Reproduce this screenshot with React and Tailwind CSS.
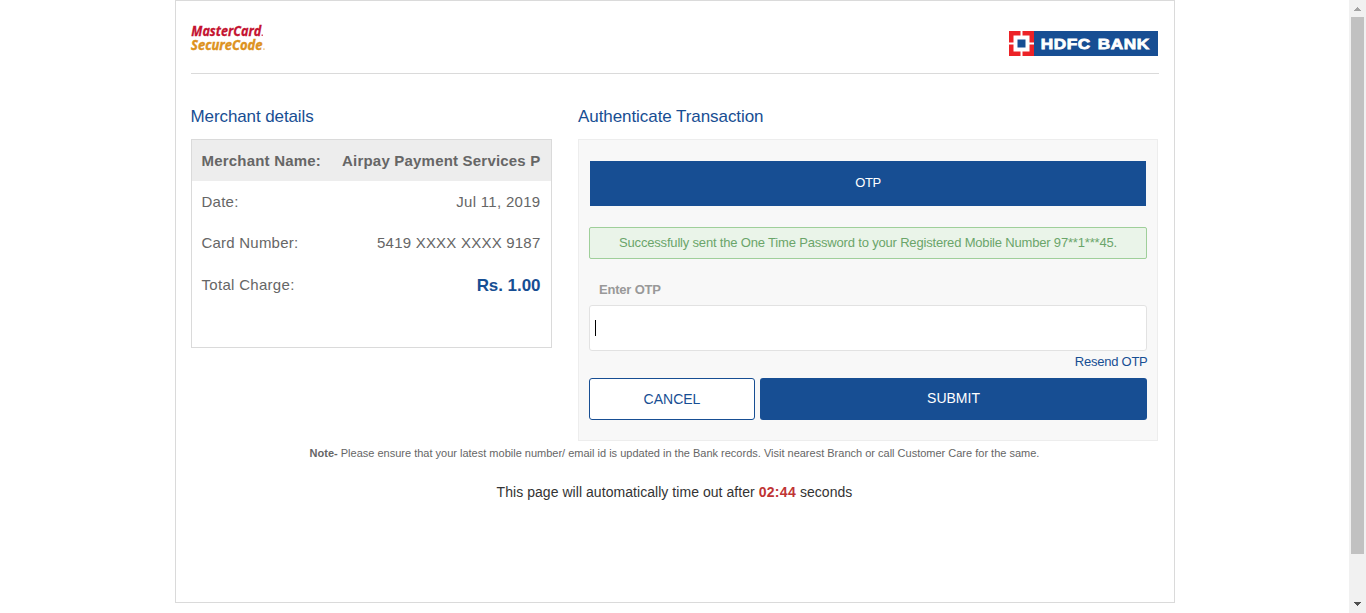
function MasterCardLogo() {
  return (
    <svg className="block overflow-visible" width="80" height="32" viewBox="0 0 80 32" role="img" aria-label="MasterCard SecureCode">
      <g fontFamily="'Open Sans', sans-serif" fontStyle="italic" fontSize="14">
        <text x="0.3" y="14" fill="#c41230" stroke="#c41230" strokeWidth="0.3" fontWeight="700" textLength="70" lengthAdjust="spacingAndGlyphs">MasterCard</text>
        <text x="0" y="28" fill="#dd9220" stroke="#dd9220" strokeWidth="0.4" fontWeight="700" textLength="71.5" lengthAdjust="spacingAndGlyphs">SecureCode</text>
      </g>
      <rect x="70.5" y="12.5" width="1.5" height="1.5" fill="#d8526a" />
      <rect x="72" y="26.5" width="1.8" height="1.2" fill="#ecc47e" />
    </svg>
  );
}

function HdfcLogo() {
  return (
    <svg className="block" width="149" height="25" viewBox="0 0 149 25" role="img" aria-label="HDFC BANK">
      <rect width="149" height="25" fill="#174e93" />
      <rect width="25" height="25" fill="#ec2227" />
      <path d="M11.5 0h2v25h-2zM0 11.5h25v2H0z" fill="#fff" />
      <rect x="4.5" y="4.5" width="16" height="16" fill="#fff" />
      <rect x="8.5" y="8.5" width="8" height="8" fill="#174e93" />
      <text x="31.8" y="17.8" fill="#fff" stroke="#fff" strokeWidth="0.8" fontFamily="'Liberation Sans', sans-serif" fontWeight="700" fontSize="15.5" letterSpacing="0.5" wordSpacing="1.5" textLength="109" lengthAdjust="spacingAndGlyphs">HDFC BANK</text>
    </svg>
  );
}

function Row({ label, value, className, valueClass = "" }) {
  return (
    <div className={`flex items-center justify-between pl-[10px] pr-[10px] ${className}`}>
      <span>{label}</span>
      <span className={valueClass}>{value}</span>
    </div>
  );
}

function Scrollbar() {
  return (
    <div className="flex h-[613px] w-[17px] shrink-0 flex-col items-center bg-[#f1f1f1]">
      <svg className="block shrink-0" width="17" height="17" viewBox="0 0 17 17" shapeRendering="crispEdges">
        <path d="M8 7h1v1h1v1h1v1h1v1H5v-1h1V9h1V8h1z" fill="#a3a3a3" />
      </svg>
      <div className="h-[537px] w-[13px] bg-[#c1c1c1]" />
      <div className="flex-1" />
      <svg className="block shrink-0" width="17" height="17" viewBox="0 0 17 17" shapeRendering="crispEdges">
        <path d="M5 6h7v1h-1v1h-1v1H9v1H8V9H7V8H6V7H5z" fill="#505050" />
      </svg>
    </div>
  );
}

export default function App() {
  return (
    <div className="flex h-[613px] w-[1366px] overflow-hidden bg-white font-['Liberation_Sans',Arial,sans-serif] text-[#666]">
      <div className="flex flex-1 justify-center">
        <main className="h-[603px] w-[1000px] border border-[#dadada] px-[15px]">
          <header className="flex h-[73px] w-[968px] items-start justify-between border-b border-[#dadada]">
            <div className="pt-[21px]"><MasterCardLogo /></div>
            <div className="pt-[30px] pr-px"><HdfcLogo /></div>
          </header>

          <div className="flex">
            <section className="w-[361px]">
              <h2 className="mt-[31px] h-[34px] text-[17px] leading-[24px] tracking-[-0.1px] text-[#174e93]">Merchant details</h2>
              <div className="h-[209px] border border-[#dadada] text-[15px]">
                <Row label="Merchant Name:" value="Airpay Payment Services P" className="h-[41px] bg-[#ededed] pt-[2px] font-bold tracking-[0.2px]" />
                <Row label="Date:" value="Jul 11, 2019" className="h-[41px] pt-[2px] tracking-[0.25px]" valueClass="tracking-[0.3px]" />
                <Row label="Card Number:" value="5419 XXXX XXXX 9187" className="h-[41px] pt-[2px] tracking-[0.22px]" />
                <Row label="Total Charge:" value="Rs. 1.00" className="h-[42px] pt-[3px] tracking-[0.3px]" valueClass="text-[17px] tracking-[-0.05px] font-bold text-[#174e93]" />
              </div>
            </section>

            <section className="ml-[26px] w-[580px]">
              <h2 className="mt-[31px] h-[34px] pl-[0.5px] text-[17px] leading-[24px] tracking-[-0.07px] text-[#174e93]">Authenticate Transaction</h2>
              <div className="flex h-[302px] flex-col border border-[#ededed] bg-[#f8f8f8] px-[10px] pt-[21px]">
                <div className="mx-px flex h-[45px] shrink-0 items-center justify-center bg-[#174e93] pb-[2px] pl-px text-[13px] tracking-[-0.4px] text-white">OTP</div>
                <div className="mt-[21px] flex h-[32px] shrink-0 items-center justify-center rounded-[2px] border border-[#9fcf9a] bg-[#eaf4e9] pl-px text-[13px] tracking-[-0.18px] text-[#6aa56a]">
                  Successfully sent the One Time Password to your Registered Mobile Number 97**1***45.
                </div>
                <label className="mt-[21px] ml-[10.5px] h-[25px] shrink-0 text-[13px] leading-[20px] font-bold tracking-[-0.2px] text-[#999]">Enter OTP</label>
                <div className="flex h-[46px] shrink-0 items-center rounded-[3px] border border-[#e2e2e2] bg-white pl-[5px]">
                  <div className="h-4 w-px bg-black" />
                </div>
                <a className="-mr-px h-[27px] shrink-0 text-right text-[13px] leading-[22px] tracking-[-0.25px] text-[#174e93]">Resend OTP</a>
                <div className="flex gap-[5px]">
                  <button className="h-[42px] w-[166px] rounded-[3px] border border-[#174e93] bg-white pl-px text-sm text-[#174e93]">CANCEL</button>
                  <button className="h-[42px] flex-1 rounded-[3px] bg-[#174e93] pb-[2px] pl-px text-sm text-white">SUBMIT</button>
                </div>
              </div>
            </section>
          </div>

          <p className="mt-[4px] text-center text-[11px] leading-[16px] whitespace-nowrap"><b>Note-</b> Please ensure that your latest mobile number/ email id is updated in the Bank records. Visit nearest Branch or call Customer Care for the same.</p>
          <p className="mt-[21px] text-center text-sm leading-[20px] tracking-[0.05px] text-[#333]">This page will automatically time out after <b className="tracking-[0.3px] text-[#c03434]">02:44</b> seconds</p>
        </main>
      </div>
      <Scrollbar />
    </div>
  );
}
